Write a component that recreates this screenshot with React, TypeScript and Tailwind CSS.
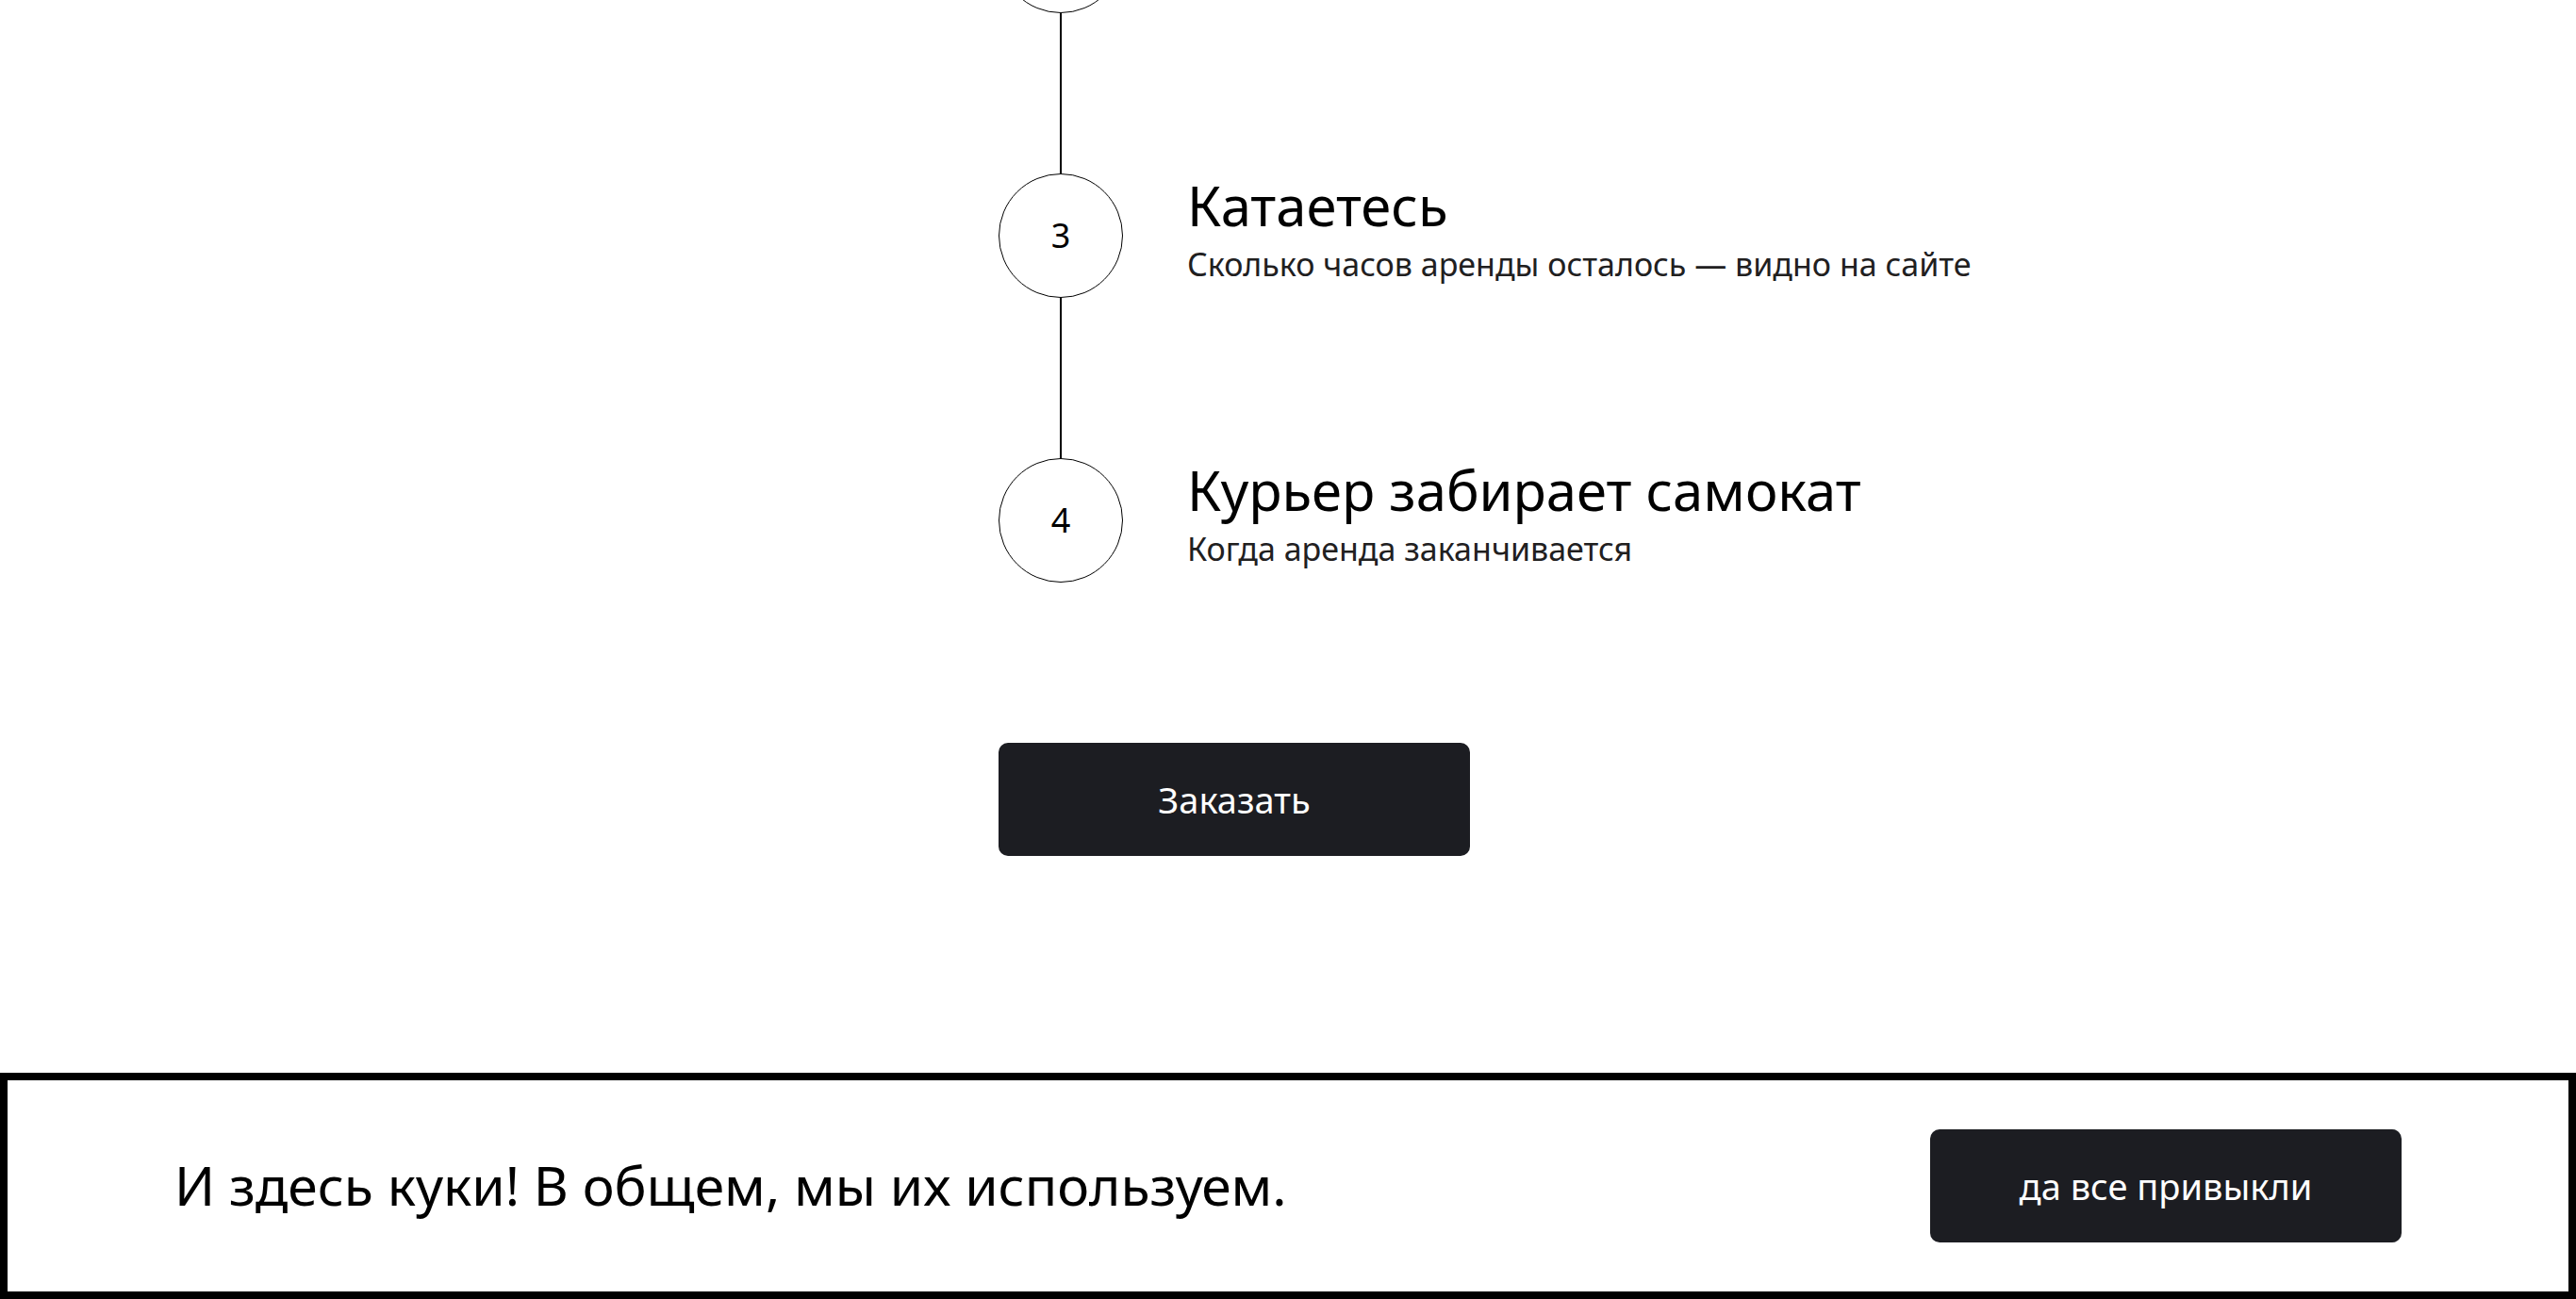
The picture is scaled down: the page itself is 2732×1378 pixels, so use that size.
import React from "react";

type Step = { n: number; title?: string; text?: string };

// step 2 is scrolled above the fold, only its circle peeks in
const steps: Step[] = [
  { n: 2 },
  { n: 3, title: "Катаетесь", text: "Сколько часов аренды осталось — видно на сайте" },
  { n: 4, title: "Курьер забирает самокат", text: "Когда аренда заканчивается" },
];

const font = { fontFamily: '"Noto Sans", "Open Sans", Arial, sans-serif' };

const StepRow: React.FC<{ step: Step }> = ({ step }) => (
  <div className="flex items-center h-[132px]">
    <div className="w-[132px] h-[132px] shrink-0 rounded-full border-[1.5px] border-black flex items-center justify-center text-[36px] text-black">
      {step.n}
    </div>
    {step.title && (
      <div className="ml-[68px] pb-[10px] flex flex-col">
        <div className="text-[58px] leading-[70px] text-black">{step.title}</div>
        <div className="text-[34px] leading-[54px] text-[#21201f]">{step.text}</div>
      </div>
    )}
  </div>
);

const Connector = () => (
  <div className="w-[132px] h-[170px] flex justify-center">
    <div className="w-[1.5px] h-full bg-black" />
  </div>
);

export default function App() {
  return (
    <div className="h-screen w-full bg-white flex flex-col overflow-hidden" style={font}>
      <main className="flex-1 pl-[1059px]">
        <div className="mt-[-118px] flex flex-col">
          {steps.map((s, i) => (
            <React.Fragment key={s.n}>
              {i > 0 && <Connector />}
              <StepRow step={s} />
            </React.Fragment>
          ))}
        </div>
        <button className="mt-[170px] w-[500px] h-[120px] rounded-[10px] bg-[#1c1d22] text-white text-[38px] flex items-center justify-center">
          Заказать
        </button>
      </main>
      <footer className="h-[240px] shrink-0 border-8 border-black bg-white flex items-center justify-between px-[177px]">
        <div className="text-[57px] text-black">И здесь куки! В общем, мы их используем.</div>
        <button className="w-[500px] h-[120px] rounded-[10px] bg-[#1c1d22] text-white text-[38px] flex items-center justify-center">
          да все привыкли
        </button>
      </footer>
    </div>
  );
}
